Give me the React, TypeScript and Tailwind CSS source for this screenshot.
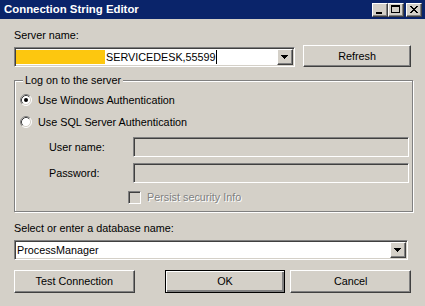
import React from "react";

const sunken =
  "border border-t-[#808080] border-l-[#808080] border-b-white border-r-white shadow-[inset_1px_1px_0_#404040,inset_-1px_-1px_0_#d4d0c8]";
const raised =
  "border border-t-white border-l-white border-b-[#404040] border-r-[#404040] shadow-[inset_-1px_-1px_0_#808080]";

function TitleBtn({ kind, className = "" }: { kind: "min" | "max" | "close"; className?: string }) {
  return (
    <div className={`${raised} bg-[#d4d0c8] w-[16px] h-[14px] ${className}`}>
      <svg width="14" height="12" viewBox="0 0 14 12" shapeRendering="crispEdges">
        {kind === "min" && <rect x="3" y="8" width="6" height="2" fill="#000" />}
        {kind === "max" && (
          <g fill="#000">
            <rect x="2" y="1" width="9" height="2" />
            <rect x="2" y="1" width="1" height="8" />
            <rect x="10" y="1" width="1" height="8" />
            <rect x="2" y="8" width="9" height="1" />
          </g>
        )}
        {kind === "close" && (
          <g fill="#000">
            {[0, 1, 2, 3, 4, 5, 6].map((i) => (
              <React.Fragment key={i}>
                <rect x={3 + i} y={2 + i} width="2" height="1" />
                <rect x={9 - i} y={2 + i} width="2" height="1" />
              </React.Fragment>
            ))}
          </g>
        )}
      </svg>
    </div>
  );
}

function DropBtn() {
  return (
    <div className={`${raised} bg-[#d4d0c8] w-[16px] h-[16px] shrink-0`}>
      <svg width="14" height="14" viewBox="0 0 14 14" shapeRendering="crispEdges">
        <g fill="#000">
          <rect x="3" y="5" width="7" height="1" />
          <rect x="4" y="6" width="5" height="1" />
          <rect x="5" y="7" width="3" height="1" />
          <rect x="6" y="8" width="1" height="1" />
        </g>
      </svg>
    </div>
  );
}

function Radio({ checked }: { checked?: boolean }) {
  return (
    <svg width="12" height="12" viewBox="0 0 12 12" className="shrink-0">
      <circle cx="6" cy="6" r="5" fill="#fff" />
      <path d="M2.11 9.89 A5.5 5.5 0 0 1 9.89 2.11" fill="none" stroke="#808080" strokeWidth="1" />
      <path d="M9.89 2.11 A5.5 5.5 0 0 1 2.11 9.89" fill="none" stroke="#fff" strokeWidth="1" />
      <path d="M2.82 9.18 A4.5 4.5 0 0 1 9.18 2.82" fill="none" stroke="#404040" strokeWidth="1" />
      <path d="M9.18 2.82 A4.5 4.5 0 0 1 2.82 9.18" fill="none" stroke="#d4d0c8" strokeWidth="1" />
      {checked && <circle cx="6" cy="6" r="2" fill="#000" />}
    </svg>
  );
}

function Btn({ children, className = "" }: { children: React.ReactNode; className?: string }) {
  return (
    <div className={`${raised} bg-[#d4d0c8] w-[122px] h-[23px] flex items-center justify-center ${className}`}>
      {children}
    </div>
  );
}

export default function App() {
  return (
    <div className="w-[425px] h-[306px] overflow-hidden bg-[#d4d0c8] font-['Liberation_Sans',Arial,sans-serif] text-[10.8px] leading-[13px] text-black">
      {/* Title bar */}
      <div className="h-[19px] bg-[#0a246a] flex items-center pl-[4px] pr-[3px]">
        <span className="text-white font-bold text-[11.4px]">Connection String Editor</span>
        <div className="ml-auto flex items-center">
          <TitleBtn kind="min" />
          <TitleBtn kind="max" />
          <TitleBtn kind="close" className="ml-[2px]" />
        </div>
      </div>

      <div className="px-[14px]">
        <div className="mt-[10px] h-[13px]">Server name:</div>
        <div className="mt-[3px] flex items-end">
          <div className={`${sunken} bg-white flex p-[1px] w-[284px] h-[20px]`}>
            <div className="flex-1 flex items-center min-w-0">
              <div className="w-[89px] h-[14px] bg-[#fdc70f]" />
              <span className="ml-[1px]">SERVICEDESK,55599</span>
              <div className="w-[1px] h-[14px] bg-black" />
            </div>
            <DropBtn />
          </div>
          <div className={`${raised} bg-[#d4d0c8] w-[109px] h-[22px] ml-[8px] flex items-center justify-center`}>
            Refresh
          </div>
        </div>

        {/* Group box */}
        <div className="relative mt-[13px] w-[399px] h-[132px] border border-[#808080] shadow-[1px_1px_0_#fff,inset_1px_1px_0_#fff] pt-[13px] pl-[5px]">
          <span className="absolute left-[8px] -top-[7px] px-[2px] bg-[#d4d0c8]">Log on to the server</span>
          <div className="h-[12px] flex items-center">
            <Radio checked />
            <span className="ml-[6px]">Use Windows Authentication</span>
          </div>
          <div className="mt-[10px] h-[12px] flex items-center">
            <Radio />
            <span className="ml-[6px]">Use SQL Server Authentication</span>
          </div>
          <div className="mt-[9px] h-[20px] flex items-center">
            <span className="ml-[29px] w-[84px]">User name:</span>
            <div className={`${sunken} bg-[#d4d0c8] w-[276px] h-[20px]`} />
          </div>
          <div className="mt-[6px] h-[20px] flex items-center">
            <span className="ml-[29px] w-[84px]">Password:</span>
            <div className={`${sunken} bg-[#d4d0c8] w-[276px] h-[20px]`} />
          </div>
          <div className="mt-[8px] h-[13px] flex items-center">
            <div className={`${sunken} bg-[#d4d0c8] w-[13px] h-[13px] ml-[108px]`} />
            <span className="ml-[6px] text-[#808080] [text-shadow:1px_1px_0_#fff]">Persist security Info</span>
          </div>
        </div>

        <div className="mt-[10px] h-[13px]">Select or enter a database name:</div>
        <div className={`${sunken} bg-white flex p-[1px] w-[394px] h-[20px] mt-[5px]`}>
          <div className="flex-1 flex items-center min-w-0 pl-[1px]">
            <span>ProcessManager</span>
          </div>
          <DropBtn />
        </div>

        <div className="mt-[10px] flex">
          <Btn>Test Connection</Btn>
          <div className="ml-[30px] w-[122px] h-[23px] flex items-center justify-center bg-[#d4d0c8] border border-black shadow-[inset_1px_1px_0_#fff,inset_-2px_-2px_0_#808080]">
            OK
          </div>
          <Btn className="ml-[5px]">Cancel</Btn>
        </div>
      </div>
    </div>
  );
}
